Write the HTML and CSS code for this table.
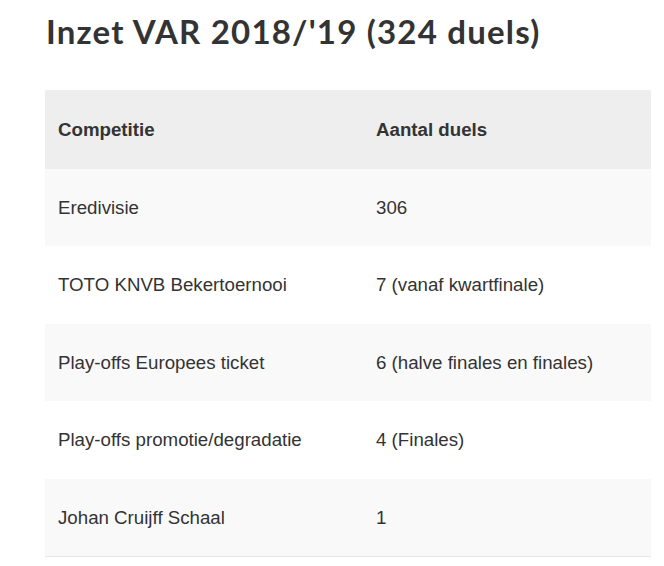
FILE: index.html
```html
<!DOCTYPE html>
<html lang="nl">
<head>
<meta charset="utf-8">
<title>Inzet VAR 2018/'19</title>
<link rel="stylesheet" href="styles.css">
</head>
<body>
<main class="page">
  <h1 class="title">Inzet VAR 2018/'19 (324 duels)</h1>
  <table class="stats">
    <thead>
      <tr><th class="col-a">Competitie</th><th>Aantal duels</th></tr>
    </thead>
    <tbody>
      <tr><td>Eredivisie</td><td>306</td></tr>
      <tr><td>TOTO KNVB Bekertoernooi</td><td>7 (vanaf kwartfinale)</td></tr>
      <tr><td>Play-offs Europees ticket</td><td>6 (halve finales en finales)</td></tr>
      <tr><td>Play-offs promotie/degradatie</td><td>4 (Finales)</td></tr>
      <tr><td>Johan Cruijff Schaal</td><td>1</td></tr>
    </tbody>
  </table>
</main>
</body>
</html>
```

FILE: styles.css
```css
html, body {
  margin: 0;
  padding: 0;
  background: #ffffff;
}

.page {
  padding: 0 13px 0 45px;
  color: #333333;
}

.title {
  margin: 0;
  padding: 10px 0 0 1px;
  height: 90px;
  box-sizing: border-box;
  font-family: "Lato", "Liberation Sans", sans-serif;
  font-weight: 700;
  font-size: 33px;
  line-height: 42px;
  letter-spacing: 1.2px;
  color: #333333;
}

.stats {
  width: 606px;
  border-collapse: collapse;
  font-family: "Liberation Sans", Arial, sans-serif;
  font-size: 18.7px;
  color: #333333;
}

.stats th,
.stats td {
  text-align: left;
  padding: 26px 13px;
  line-height: 25.4px;
  vertical-align: middle;
}

.stats th {
  font-weight: 700;
  background: #eeeeee;
  padding-top: 27px;
  padding-bottom: 27px;
  line-height: 25px;
}

.stats .col-a {
  width: 292px;
}

.stats tbody tr:nth-child(odd) {
  background: #f9f9f9;
}

.stats tbody tr:nth-child(even) {
  background: #ffffff;
}

.stats tbody tr:last-child {
  border-bottom: 1px solid #e6e6e6;
}
```
